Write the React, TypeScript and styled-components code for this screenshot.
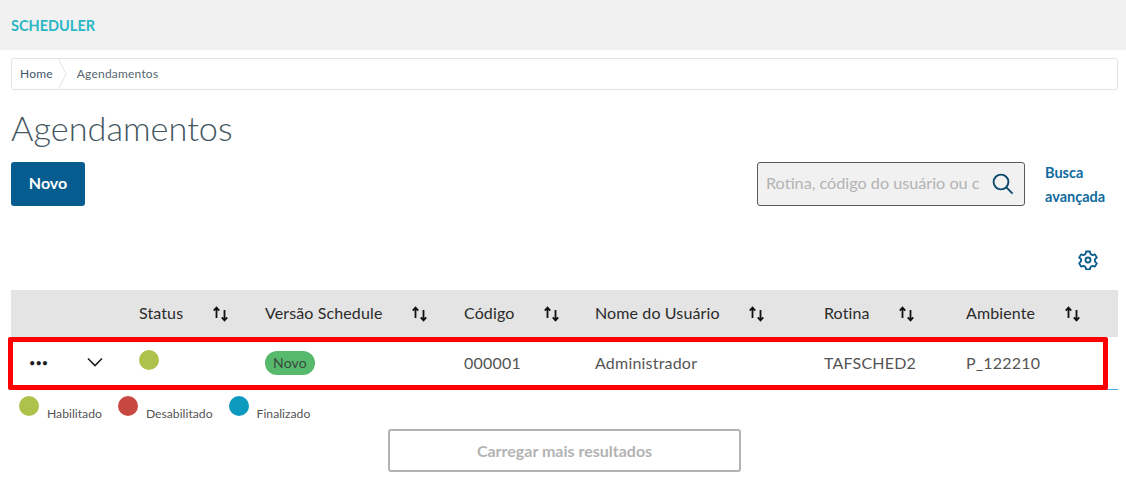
import * as React from 'react'
import styled, { createGlobalStyle } from 'styled-components'

const COLUMNS = '128px 126px 199px 131px 229px 142px 1fr'

const headers = ['Status', 'Versão Schedule', 'Código', 'Nome do Usuário', 'Rotina', 'Ambiente']

const legend = [
  { label: 'Habilitado', color: '#adc24b' },
  { label: 'Desabilitado', color: '#c64840' },
  { label: 'Finalizado', color: '#0c9abe' }
]

const SortIcon = () => (
  <SortSvg width="17" height="16" viewBox="0 0 17 16" fill="none" stroke="#111" strokeWidth="1.8">
    <path d="M4.5 12V1.5M1.8 4.6 4.5 1.5 7.2 4.6" />
    <path d="M12.5 4v10.5M9.8 11.4l2.7 3.1 2.7-3.1" />
  </SortSvg>
)

export default () => (
  <>
    <GlobalStyle />
    <Header>
      <HeaderTitle>SCHEDULER</HeaderTitle>
    </Header>
    <Page>
      <Breadcrumb>
        <Crumb>
          Home
          <CrumbArrow width="10" height="32" viewBox="0 0 10 32" fill="none" stroke="#e3e3e3">
            <path d="M1 0 9 16 1 32" />
          </CrumbArrow>
        </Crumb>
        <CrumbCurrent>Agendamentos</CrumbCurrent>
      </Breadcrumb>
      <Title>Agendamentos</Title>
      <Toolbar>
        <PrimaryButton>Novo</PrimaryButton>
        <SearchArea>
          <SearchBox>
            <SearchInput placeholder="Rotina, código do usuário ou c" readOnly />
            <svg width="22" height="22" viewBox="0 0 22 22" fill="none" stroke="#0c4a6e" strokeWidth="1.9">
              <circle cx="9" cy="9" r="7.4" />
              <path d="M14.4 14.4 20.6 20.6" />
            </svg>
          </SearchBox>
          <AdvancedLink>Busca avançada</AdvancedLink>
        </SearchArea>
      </Toolbar>
      <SettingsRow>
        <svg width="20" height="20" viewBox="0 0 24 24" fill="none" stroke="#0b5d8e" strokeWidth="2.2" strokeLinejoin="round">
          <path d="M9.7 2.5h4.6l.7 3 2.3 1.3 3-.9 2.3 4-2.3 2.1v2.6l2.3 2.1-2.3 4-3-.9-2.3 1.3-.7 3H9.7l-.7-3-2.3-1.3-3 .9-2.3-4L3.7 14v-2.6L1.4 9.9l2.3-4 3 .9L9 5.5z" transform="translate(0 -.7)" />
          <circle cx="12" cy="12" r="3" />
        </svg>
      </SettingsRow>
      <Table>
        <HeadRow>
          <span />
          {headers.map(header => (
            <HeadCell key={header}>
              {header}
              <SortIcon />
            </HeadCell>
          ))}
        </HeadRow>
        <BodyRow>
          <Actions>
            <Dots>•••</Dots>
            <svg width="16" height="10" viewBox="0 0 16 10" fill="none" stroke="#1c1c1c" strokeWidth="1.6">
              <path d="M1 1.5 8 8.5 15 1.5" />
            </svg>
          </Actions>
          <StatusCell>
            <Dot color="#adc24b" />
          </StatusCell>
          <Cell>
            <Tag>Novo</Tag>
          </Cell>
          <Cell>000001</Cell>
          <Cell>Administrador</Cell>
          <Cell>TAFSCHED2</Cell>
          <Cell>P_122210</Cell>
        </BodyRow>
        <Highlight />
      </Table>
      <Legend>
        {legend.map(item => (
          <LegendItem key={item.label}>
            <Dot color={item.color} />
            <LegendLabel>{item.label}</LegendLabel>
          </LegendItem>
        ))}
      </Legend>
      <LoadMoreRow>
        <LoadMore>Carregar mais resultados</LoadMore>
      </LoadMoreRow>
    </Page>
  </>
)

const GlobalStyle = createGlobalStyle`
  body {
    margin: 0;
    background: #fff;
    font-family: 'Lato', 'Noto Sans', sans-serif;
    color: #1c1c1c;
  }
`

const Header = styled.header`
  display: flex;
  align-items: center;
  height: 50px;
  padding-left: 11px;
  background: #f1f1f1;
`

const HeaderTitle = styled.div`
  font-size: 14.5px;
  font-weight: 700;
  color: #29b6c5;
`

const Page = styled.main`
  padding: 8px 8px 0 11px;
`

const Breadcrumb = styled.nav`
  display: flex;
  align-items: center;
  height: 32px;
  box-sizing: border-box;
  padding-bottom: 1px;
  border: 1px solid #e3e3e3;
  border-radius: 3px;
  font-size: 12px;
  letter-spacing: 0.2px;
`

const Crumb = styled.div`
  position: relative;
  display: flex;
  align-items: center;
  height: 100%;
  padding: 0 8px;
  color: #3f566b;
`

const CrumbArrow = styled.svg`
  position: absolute;
  right: -6px;
  top: -1px;
`

const CrumbCurrent = styled.div`
  margin-left: 16px;
  color: #566570;
`

const Title = styled.h1`
  margin: 16px 0 0;
  height: 56px;
  font-size: 34.3px;
  line-height: 44px;
  font-weight: 300;
  color: #44565f;
`

const Toolbar = styled.div`
  display: flex;
  justify-content: space-between;
  align-items: flex-start;
`

const PrimaryButton = styled.button`
  width: 74px;
  height: 44px;
  padding: 0 0 3px;
  border: 0;
  border-radius: 3px;
  background: #055c8f;
  color: #fff;
  font-family: inherit;
  font-size: 16px;
  font-weight: 700;
`

const SearchArea = styled.div`
  display: flex;
  align-items: flex-start;
  gap: 20px;
  margin-right: 11px;
`

const SearchBox = styled.div`
  display: flex;
  align-items: center;
  width: 268px;
  height: 44px;
  box-sizing: border-box;
  padding: 0 10px 0 8px;
  border: 1px solid #5a5a5a;
  border-radius: 3px;
  background: #f1f1f1;
`

const SearchInput = styled.input`
  flex: 1;
  min-width: 0;
  padding: 0 0 3px;
  border: 0;
  outline: 0;
  background: transparent;
  font-family: inherit;
  font-size: 16.2px;

  &::placeholder {
    color: #b3b3b3;
    opacity: 1;
  }
`

const AdvancedLink = styled.a`
  width: 62px;
  margin-top: -1px;
  font-size: 14.5px;
  line-height: 24px;
  font-weight: 700;
  color: #0f6b9e;
`

const SettingsRow = styled.div`
  display: flex;
  justify-content: flex-end;
  height: 20px;
  margin-top: 41px;
  padding-right: 20px;
  margin-bottom: 20px;
`

const Table = styled.div`
  position: relative;
`

const Row = styled.div`
  display: grid;
  grid-template-columns: ${COLUMNS};
  align-items: center;
`

const HeadRow = styled(Row)`
  height: 47px;
  padding-bottom: 3px;
  box-sizing: border-box;
  background: #e4e4e4;
`

const HeadCell = styled.div`
  display: flex;
  align-items: center;
  gap: 28.5px;
  font-size: 16px;
  letter-spacing: 0.12px;
  color: #2b2b2b;
  white-space: nowrap;
`

const SortSvg = styled.svg`
  margin-top: 3px;
`

const BodyRow = styled(Row)`
  height: 53px;
  box-sizing: border-box;
  padding-bottom: 2px;
  border-bottom: 1px solid #55aee6;
`

const Actions = styled.div`
  display: flex;
  align-items: center;
  gap: 40px;
  padding-left: 18px;
`

const Dots = styled.span`
  width: 18px;
  font-size: 11px;
  letter-spacing: 0;
  white-space: nowrap;
`

const StatusCell = styled.div`
  align-self: start;
  padding-top: 13px;
`

const Cell = styled.div`
  font-size: 16px;
  letter-spacing: 0.2px;
  color: #555;
`

const Dot = styled.span<{ color: string }>`
  display: block;
  width: 20px;
  height: 20px;
  border-radius: 50%;
  background: ${props => props.color};
`

const Tag = styled.span`
  display: inline-block;
  margin-top: 2px;
  padding: 0 8px;
  height: 24px;
  line-height: 24px;
  border-radius: 12px;
  background: #56b96c;
  font-size: 14px;
  color: #3a4a3f;
`

const Highlight = styled.div`
  position: absolute;
  left: -3px;
  top: 47px;
  width: 1100px;
  height: 53px;
  box-sizing: border-box;
  border: 5px solid #ff0000;
  border-radius: 2px;
`

const Legend = styled.div`
  display: flex;
  margin-top: 6px;
  padding-left: 8px;
  gap: 16px;
`

const LegendItem = styled.div`
  display: flex;
  gap: 8px;
`

const LegendLabel = styled.span`
  margin-top: 10px;
  font-size: 12.2px;
  line-height: 16px;
  color: #555;
`

const LoadMoreRow = styled.div`
  display: flex;
  margin-top: 7px;
  padding-left: 377px;
`

const LoadMore = styled.button`
  width: 353px;
  height: 43px;
  border: 2px solid #b3b3b3;
  border-radius: 3px;
  background: #fff;
  font-family: inherit;
  font-size: 16px;
  font-weight: 700;
  color: #b3b3b3;
`
